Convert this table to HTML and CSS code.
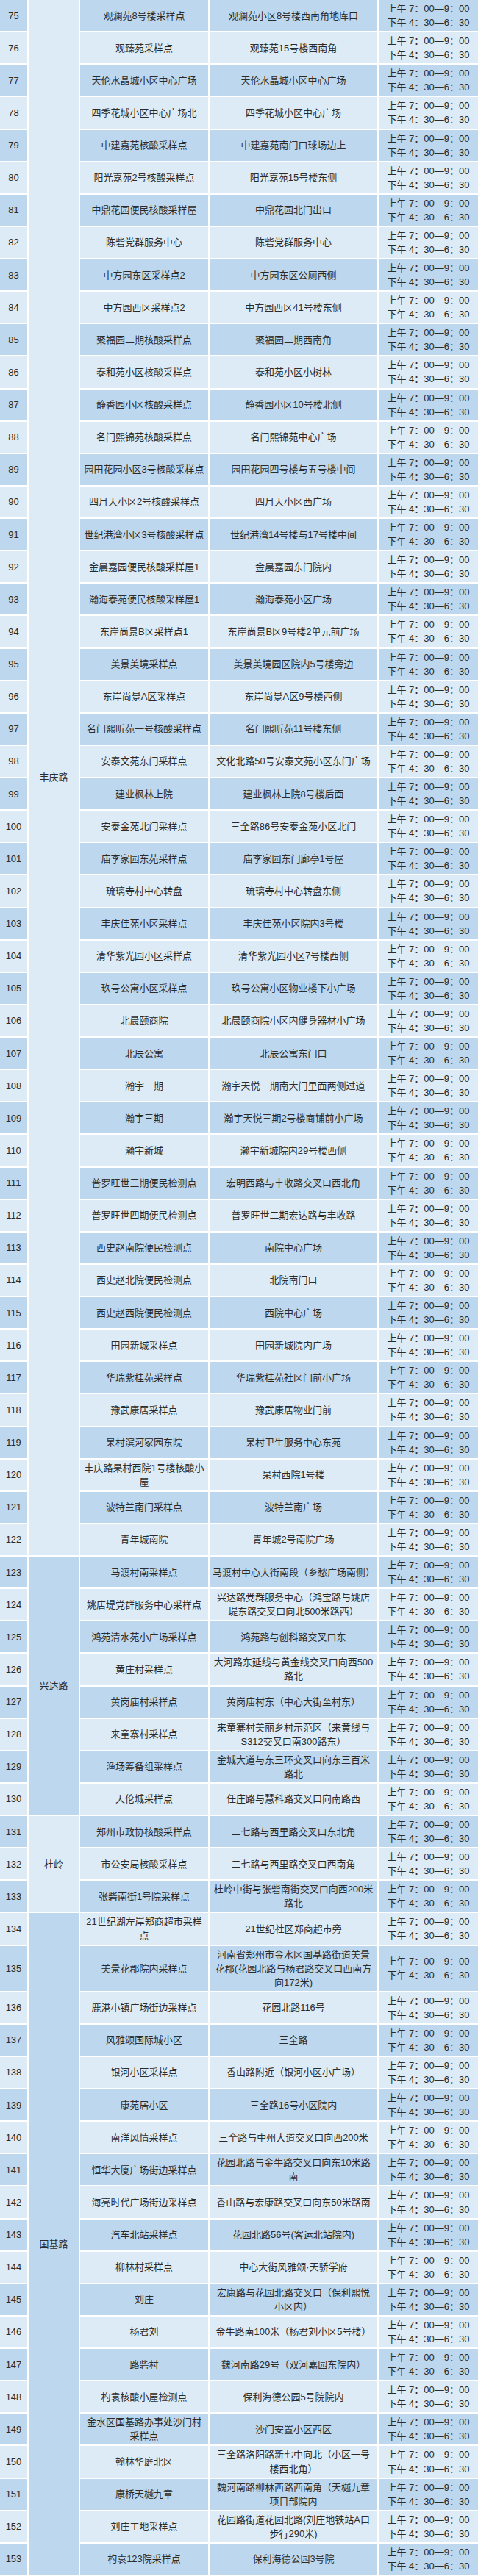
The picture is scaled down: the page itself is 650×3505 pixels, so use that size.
FILE: index.html
```html
<!DOCTYPE html>
<html lang="zh-CN">
<head>
<meta charset="utf-8">
<title>核酸采样点</title>
<link rel="stylesheet" href="styles.css">
</head>
<body>
<div class="grid">
<div class="c num d">75</div><div class="c dist l" style="grid-row: span 48">丰庆路</div><div class="c name d">观澜苑8号楼采样点</div><div class="c addr d">观澜苑小区8号楼西南角地库口</div><div class="c time d"><span>上午 7：00—9：00</span><span>下午 4：30—6：30</span></div>
<div class="c num l">76</div><div class="c name l">观臻苑采样点</div><div class="c addr l">观臻苑15号楼西南角</div><div class="c time l"><span>上午 7：00—9：00</span><span>下午 4：30—6：30</span></div>
<div class="c num d">77</div><div class="c name d">天伦水晶城小区中心广场</div><div class="c addr d">天伦水晶城小区中心广场</div><div class="c time d"><span>上午 7：00—9：00</span><span>下午 4：30—6：30</span></div>
<div class="c num l">78</div><div class="c name l">四季花城小区中心广场北</div><div class="c addr l">四季花城小区中心广场</div><div class="c time l"><span>上午 7：00—9：00</span><span>下午 4：30—6：30</span></div>
<div class="c num d">79</div><div class="c name d">中建嘉苑核酸采样点</div><div class="c addr d">中建嘉苑南门口球场边上</div><div class="c time d"><span>上午 7：00—9：00</span><span>下午 4：30—6：30</span></div>
<div class="c num l">80</div><div class="c name l">阳光嘉苑2号核酸采样点</div><div class="c addr l">阳光嘉苑15号楼东侧</div><div class="c time l"><span>上午 7：00—9：00</span><span>下午 4：30—6：30</span></div>
<div class="c num d">81</div><div class="c name d">中鼎花园便民核酸采样屋</div><div class="c addr d">中鼎花园北门出口</div><div class="c time d"><span>上午 7：00—9：00</span><span>下午 4：30—6：30</span></div>
<div class="c num l">82</div><div class="c name l">陈砦党群服务中心</div><div class="c addr l">陈砦党群服务中心</div><div class="c time l"><span>上午 7：00—9：00</span><span>下午 4：30—6：30</span></div>
<div class="c num d">83</div><div class="c name d">中方园东区采样点2</div><div class="c addr d">中方园东区公厕西侧</div><div class="c time d"><span>上午 7：00—9：00</span><span>下午 4：30—6：30</span></div>
<div class="c num l">84</div><div class="c name l">中方园西区采样点2</div><div class="c addr l">中方园西区41号楼东侧</div><div class="c time l"><span>上午 7：00—9：00</span><span>下午 4：30—6：30</span></div>
<div class="c num d">85</div><div class="c name d">聚福园二期核酸采样点</div><div class="c addr d">聚福园二期西南角</div><div class="c time d"><span>上午 7：00—9：00</span><span>下午 4：30—6：30</span></div>
<div class="c num l">86</div><div class="c name l">泰和苑小区核酸采样点</div><div class="c addr l">泰和苑小区小树林</div><div class="c time l"><span>上午 7：00—9：00</span><span>下午 4：30—6：30</span></div>
<div class="c num d">87</div><div class="c name d">静香园小区核酸采样点</div><div class="c addr d">静香园小区10号楼北侧</div><div class="c time d"><span>上午 7：00—9：00</span><span>下午 4：30—6：30</span></div>
<div class="c num l">88</div><div class="c name l">名门熙锦苑核酸采样点</div><div class="c addr l">名门熙锦苑中心广场</div><div class="c time l"><span>上午 7：00—9：00</span><span>下午 4：30—6：30</span></div>
<div class="c num d">89</div><div class="c name d">园田花园小区3号核酸采样点</div><div class="c addr d">园田花园四号楼与五号楼中间</div><div class="c time d"><span>上午 7：00—9：00</span><span>下午 4：30—6：30</span></div>
<div class="c num l">90</div><div class="c name l">四月天小区2号核酸采样点</div><div class="c addr l">四月天小区西广场</div><div class="c time l"><span>上午 7：00—9：00</span><span>下午 4：30—6：30</span></div>
<div class="c num d">91</div><div class="c name d">世纪港湾小区3号核酸采样点</div><div class="c addr d">世纪港湾14号楼与17号楼中间</div><div class="c time d"><span>上午 7：00—9：00</span><span>下午 4：30—6：30</span></div>
<div class="c num l">92</div><div class="c name l">金晨嘉园便民核酸采样屋1</div><div class="c addr l">金晨嘉园东门院内</div><div class="c time l"><span>上午 7：00—9：00</span><span>下午 4：30—6：30</span></div>
<div class="c num d">93</div><div class="c name d">瀚海泰苑便民核酸采样屋1</div><div class="c addr d">瀚海泰苑小区广场</div><div class="c time d"><span>上午 7：00—9：00</span><span>下午 4：30—6：30</span></div>
<div class="c num l">94</div><div class="c name l">东岸尚景B区采样点1</div><div class="c addr l">东岸尚景B区9号楼2单元前广场</div><div class="c time l"><span>上午 7：00—9：00</span><span>下午 4：30—6：30</span></div>
<div class="c num d">95</div><div class="c name d">美景美境采样点</div><div class="c addr d">美景美境园区院内5号楼旁边</div><div class="c time d"><span>上午 7：00—9：00</span><span>下午 4：30—6：30</span></div>
<div class="c num l">96</div><div class="c name l">东岸尚景A区采样点</div><div class="c addr l">东岸尚景A区9号楼西侧</div><div class="c time l"><span>上午 7：00—9：00</span><span>下午 4：30—6：30</span></div>
<div class="c num d">97</div><div class="c name d">名门熙昕苑一号核酸采样点</div><div class="c addr d">名门熙昕苑11号楼东侧</div><div class="c time d"><span>上午 7：00—9：00</span><span>下午 4：30—6：30</span></div>
<div class="c num l">98</div><div class="c name l">安泰文苑东门采样点</div><div class="c addr l">文化北路50号安泰文苑小区东门广场</div><div class="c time l"><span>上午 7：00—9：00</span><span>下午 4：30—6：30</span></div>
<div class="c num d">99</div><div class="c name d">建业枫林上院</div><div class="c addr d">建业枫林上院8号楼后面</div><div class="c time d"><span>上午 7：00—9：00</span><span>下午 4：30—6：30</span></div>
<div class="c num l">100</div><div class="c name l">安泰金苑北门采样点</div><div class="c addr l">三全路86号安泰金苑小区北门</div><div class="c time l"><span>上午 7：00—9：00</span><span>下午 4：30—6：30</span></div>
<div class="c num d">101</div><div class="c name d">庙李家园东苑采样点</div><div class="c addr d">庙李家园东门廊亭1号屋</div><div class="c time d"><span>上午 7：00—9：00</span><span>下午 4：30—6：30</span></div>
<div class="c num l">102</div><div class="c name l">琉璃寺村中心转盘</div><div class="c addr l">琉璃寺村中心转盘东侧</div><div class="c time l"><span>上午 7：00—9：00</span><span>下午 4：30—6：30</span></div>
<div class="c num d">103</div><div class="c name d">丰庆佳苑小区采样点</div><div class="c addr d">丰庆佳苑小区院内3号楼</div><div class="c time d"><span>上午 7：00—9：00</span><span>下午 4：30—6：30</span></div>
<div class="c num l">104</div><div class="c name l">清华紫光园小区采样点</div><div class="c addr l">清华紫光园小区7号楼西侧</div><div class="c time l"><span>上午 7：00—9：00</span><span>下午 4：30—6：30</span></div>
<div class="c num d">105</div><div class="c name d">玖号公寓小区采样点</div><div class="c addr d">玖号公寓小区物业楼下小广场</div><div class="c time d"><span>上午 7：00—9：00</span><span>下午 4：30—6：30</span></div>
<div class="c num l">106</div><div class="c name l">北晨颐商院</div><div class="c addr l">北晨颐商院小区内健身器材小广场</div><div class="c time l"><span>上午 7：00—9：00</span><span>下午 4：30—6：30</span></div>
<div class="c num d">107</div><div class="c name d">北辰公寓</div><div class="c addr d">北辰公寓东门口</div><div class="c time d"><span>上午 7：00—9：00</span><span>下午 4：30—6：30</span></div>
<div class="c num l">108</div><div class="c name l">瀚宇一期</div><div class="c addr l">瀚宇天悦一期南大门里面两侧过道</div><div class="c time l"><span>上午 7：00—9：00</span><span>下午 4：30—6：30</span></div>
<div class="c num d">109</div><div class="c name d">瀚宇三期</div><div class="c addr d">瀚宇天悦三期2号楼商铺前小广场</div><div class="c time d"><span>上午 7：00—9：00</span><span>下午 4：30—6：30</span></div>
<div class="c num l">110</div><div class="c name l">瀚宇新城</div><div class="c addr l">瀚宇新城院内29号楼西侧</div><div class="c time l"><span>上午 7：00—9：00</span><span>下午 4：30—6：30</span></div>
<div class="c num d">111</div><div class="c name d">普罗旺世三期便民检测点</div><div class="c addr d">宏明西路与丰收路交叉口西北角</div><div class="c time d"><span>上午 7：00—9：00</span><span>下午 4：30—6：30</span></div>
<div class="c num l">112</div><div class="c name l">普罗旺世四期便民检测点</div><div class="c addr l">普罗旺世二期宏达路与丰收路</div><div class="c time l"><span>上午 7：00—9：00</span><span>下午 4：30—6：30</span></div>
<div class="c num d">113</div><div class="c name d">西史赵南院便民检测点</div><div class="c addr d">南院中心广场</div><div class="c time d"><span>上午 7：00—9：00</span><span>下午 4：30—6：30</span></div>
<div class="c num l">114</div><div class="c name l">西史赵北院便民检测点</div><div class="c addr l">北院南门口</div><div class="c time l"><span>上午 7：00—9：00</span><span>下午 4：30—6：30</span></div>
<div class="c num d">115</div><div class="c name d">西史赵西院便民检测点</div><div class="c addr d">西院中心广场</div><div class="c time d"><span>上午 7：00—9：00</span><span>下午 4：30—6：30</span></div>
<div class="c num l">116</div><div class="c name l">田园新城采样点</div><div class="c addr l">田园新城院内广场</div><div class="c time l"><span>上午 7：00—9：00</span><span>下午 4：30—6：30</span></div>
<div class="c num d">117</div><div class="c name d">华瑞紫桂苑采样点</div><div class="c addr d">华瑞紫桂苑社区门前小广场</div><div class="c time d"><span>上午 7：00—9：00</span><span>下午 4：30—6：30</span></div>
<div class="c num l">118</div><div class="c name l">豫武康居采样点</div><div class="c addr l">豫武康居物业门前</div><div class="c time l"><span>上午 7：00—9：00</span><span>下午 4：30—6：30</span></div>
<div class="c num d">119</div><div class="c name d">杲村滨河家园东院</div><div class="c addr d">杲村卫生服务中心东苑</div><div class="c time d"><span>上午 7：00—9：00</span><span>下午 4：30—6：30</span></div>
<div class="c num l">120</div><div class="c name l">丰庆路杲村西院1号楼核酸小屋</div><div class="c addr l">杲村西院1号楼</div><div class="c time l"><span>上午 7：00—9：00</span><span>下午 4：30—6：30</span></div>
<div class="c num d">121</div><div class="c name d">波特兰南门采样点</div><div class="c addr d">波特兰南广场</div><div class="c time d"><span>上午 7：00—9：00</span><span>下午 4：30—6：30</span></div>
<div class="c num l">122</div><div class="c name l">青年城南院</div><div class="c addr l">青年城2号南院广场</div><div class="c time l"><span>上午 7：00—9：00</span><span>下午 4：30—6：30</span></div>
<div class="c num d">123</div><div class="c dist d" style="grid-row: span 8">兴达路</div><div class="c name d">马渡村南采样点</div><div class="c addr d">马渡村中心大街南段（乡愁广场南侧）</div><div class="c time d"><span>上午 7：00—9：00</span><span>下午 4：30—6：30</span></div>
<div class="c num l">124</div><div class="c name l">姚店堤党群服务中心采样点</div><div class="c addr l">兴达路党群服务中心（鸿宝路与姚店堤东路交叉口向北500米路西）</div><div class="c time l"><span>上午 7：00—9：00</span><span>下午 4：30—6：30</span></div>
<div class="c num d">125</div><div class="c name d">鸿苑清水苑小广场采样点</div><div class="c addr d">鸿苑路与创科路交叉口东</div><div class="c time d"><span>上午 7：00—9：00</span><span>下午 4：30—6：30</span></div>
<div class="c num l">126</div><div class="c name l">黄庄村采样点</div><div class="c addr l">大河路东延线与黄金线交叉口向西500路北</div><div class="c time l"><span>上午 7：00—9：00</span><span>下午 4：30—6：30</span></div>
<div class="c num d">127</div><div class="c name d">黄岗庙村采样点</div><div class="c addr d">黄岗庙村东（中心大街至村东）</div><div class="c time d"><span>上午 7：00—9：00</span><span>下午 4：30—6：30</span></div>
<div class="c num l">128</div><div class="c name l">来童寨村采样点</div><div class="c addr l">来童寨村美丽乡村示范区（来黄线与S312交叉口南300路东）</div><div class="c time l"><span>上午 7：00—9：00</span><span>下午 4：30—6：30</span></div>
<div class="c num d">129</div><div class="c name d">渔场筹备组采样点</div><div class="c addr d">金城大道与东三环交叉口向东三百米路北</div><div class="c time d"><span>上午 7：00—9：00</span><span>下午 4：30—6：30</span></div>
<div class="c num l">130</div><div class="c name l">天伦城采样点</div><div class="c addr l">任庄路与慧科路交叉口向南路西</div><div class="c time l"><span>上午 7：00—9：00</span><span>下午 4：30—6：30</span></div>
<div class="c num d">131</div><div class="c dist l" style="grid-row: span 3">杜岭</div><div class="c name d">郑州市政协核酸采样点</div><div class="c addr d">二七路与西里路交叉口东北角</div><div class="c time d"><span>上午 7：00—9：00</span><span>下午 4：30—6：30</span></div>
<div class="c num l">132</div><div class="c name l">市公安局核酸采样点</div><div class="c addr l">二七路与西里路交叉口西南角</div><div class="c time l"><span>上午 7：00—9：00</span><span>下午 4：30—6：30</span></div>
<div class="c num d">133</div><div class="c name d">张砦南街1号院采样点</div><div class="c addr d">杜岭中街与张砦南街交叉口向西200米路北</div><div class="c time d"><span>上午 7：00—9：00</span><span>下午 4：30—6：30</span></div>
<div class="c num l">134</div><div class="c dist d" style="grid-row: span 20">国基路</div><div class="c name l">21世纪湖左岸郑商超市采样点</div><div class="c addr l">21世纪社区郑商超市旁</div><div class="c time l"><span>上午 7：00—9：00</span><span>下午 4：30—6：30</span></div>
<div class="c num d">135</div><div class="c name d">美景花郡院内采样点</div><div class="c addr d">河南省郑州市金水区国基路街道美景花郡(花园北路与杨君路交叉口西南方向172米)</div><div class="c time d"><span>上午 7：00—9：00</span><span>下午 4：30—6：30</span></div>
<div class="c num l">136</div><div class="c name l">鹿港小镇广场街边采样点</div><div class="c addr l">花园北路116号</div><div class="c time l"><span>上午 7：00—9：00</span><span>下午 4：30—6：30</span></div>
<div class="c num d">137</div><div class="c name d">风雅颂国际城小区</div><div class="c addr d">三全路</div><div class="c time d"><span>上午 7：00—9：00</span><span>下午 4：30—6：30</span></div>
<div class="c num l">138</div><div class="c name l">银河小区采样点</div><div class="c addr l">香山路附近（银河小区小广场）</div><div class="c time l"><span>上午 7：00—9：00</span><span>下午 4：30—6：30</span></div>
<div class="c num d">139</div><div class="c name d">康苑居小区</div><div class="c addr d">三全路16号小区院内</div><div class="c time d"><span>上午 7：00—9：00</span><span>下午 4：30—6：30</span></div>
<div class="c num l">140</div><div class="c name l">南洋风情采样点</div><div class="c addr l">三全路与中州大道交叉口向西200米</div><div class="c time l"><span>上午 7：00—9：00</span><span>下午 4：30—6：30</span></div>
<div class="c num d">141</div><div class="c name d">恒华大厦广场街边采样点</div><div class="c addr d">花园北路与金牛路交叉口向东10米路南</div><div class="c time d"><span>上午 7：00—9：00</span><span>下午 4：30—6：30</span></div>
<div class="c num l">142</div><div class="c name l">海亮时代广场街边采样点</div><div class="c addr l">香山路与宏康路交叉口向东50米路南</div><div class="c time l"><span>上午 7：00—9：00</span><span>下午 4：30—6：30</span></div>
<div class="c num d">143</div><div class="c name d">汽车北站采样点</div><div class="c addr d">花园北路56号(客运北站院内)</div><div class="c time d"><span>上午 7：00—9：00</span><span>下午 4：30—6：30</span></div>
<div class="c num l">144</div><div class="c name l">柳林村采样点</div><div class="c addr l">中心大街风雅颂·天骄学府</div><div class="c time l"><span>上午 7：00—9：00</span><span>下午 4：30—6：30</span></div>
<div class="c num d">145</div><div class="c name d">刘庄</div><div class="c addr d">宏康路与花园北路交叉口（保利熙悦小区内）</div><div class="c time d"><span>上午 7：00—9：00</span><span>下午 4：30—6：30</span></div>
<div class="c num l">146</div><div class="c name l">杨君刘</div><div class="c addr l">金牛路南100米（杨君刘小区5号楼）</div><div class="c time l"><span>上午 7：00—9：00</span><span>下午 4：30—6：30</span></div>
<div class="c num d">147</div><div class="c name d">路砦村</div><div class="c addr d">魏河南路29号（双河嘉园东院内）</div><div class="c time d"><span>上午 7：00—9：00</span><span>下午 4：30—6：30</span></div>
<div class="c num l">148</div><div class="c name l">杓袁核酸小屋检测点</div><div class="c addr l">保利海德公园5号院院内</div><div class="c time l"><span>上午 7：00—9：00</span><span>下午 4：30—6：30</span></div>
<div class="c num d">149</div><div class="c name d">金水区国基路办事处沙门村采样点</div><div class="c addr d">沙门安置小区西区</div><div class="c time d"><span>上午 7：00—9：00</span><span>下午 4：30—6：30</span></div>
<div class="c num l">150</div><div class="c name l">翰林华庭北区</div><div class="c addr l">三全路洛阳路新七中向北（小区一号楼西北角）</div><div class="c time l"><span>上午 7：00—9：00</span><span>下午 4：30—6：30</span></div>
<div class="c num d">151</div><div class="c name d">康桥天樾九章</div><div class="c addr d">魏河南路柳林西路西南角（天樾九章项目部院内</div><div class="c time d"><span>上午 7：00—9：00</span><span>下午 4：30—6：30</span></div>
<div class="c num l">152</div><div class="c name l">刘庄工地采样点</div><div class="c addr l">花园路街道花园北路(刘庄地铁站A口步行290米)</div><div class="c time l"><span>上午 7：00—9：00</span><span>下午 4：30—6：30</span></div>
<div class="c num d">153</div><div class="c name d">杓袁123院采样点</div><div class="c addr d">保利海德公园3号院</div><div class="c time d"><span>上午 7：00—9：00</span><span>下午 4：30—6：30</span></div>
</div>
</body>
</html>
```
FILE: styles.css
```css
html, body {
  margin: 0;
  padding: 0;
  background: #ffffff;
}

.grid {
  display: grid;
  grid-template-columns: 37px 68px 174px 228px 135px;
  column-gap: 2px;
  row-gap: 2px;
  padding-bottom: 2px;
  width: 650px;
  background: #ffffff;
  font-family: "Liberation Sans", "Noto Sans CJK SC", sans-serif;
  font-size: 13px;
  line-height: 19.06px;
  color: #2b2b2b;
}

.c {
  display: flex;
  align-items: center;
  justify-content: center;
  text-align: center;
  padding: 2px 4px;
  min-width: 0;
}

.num { grid-column: 1; padding: 2px 0; }
.dist { grid-column: 2; }
.name { grid-column: 3; }
.addr { grid-column: 4; }
.time {
  grid-column: 5;
  flex-direction: column;
  white-space: nowrap;
  padding: 2px 0;
}

.d { background: #bdd7ee; }
.l { background: #ddebf7; }
```
